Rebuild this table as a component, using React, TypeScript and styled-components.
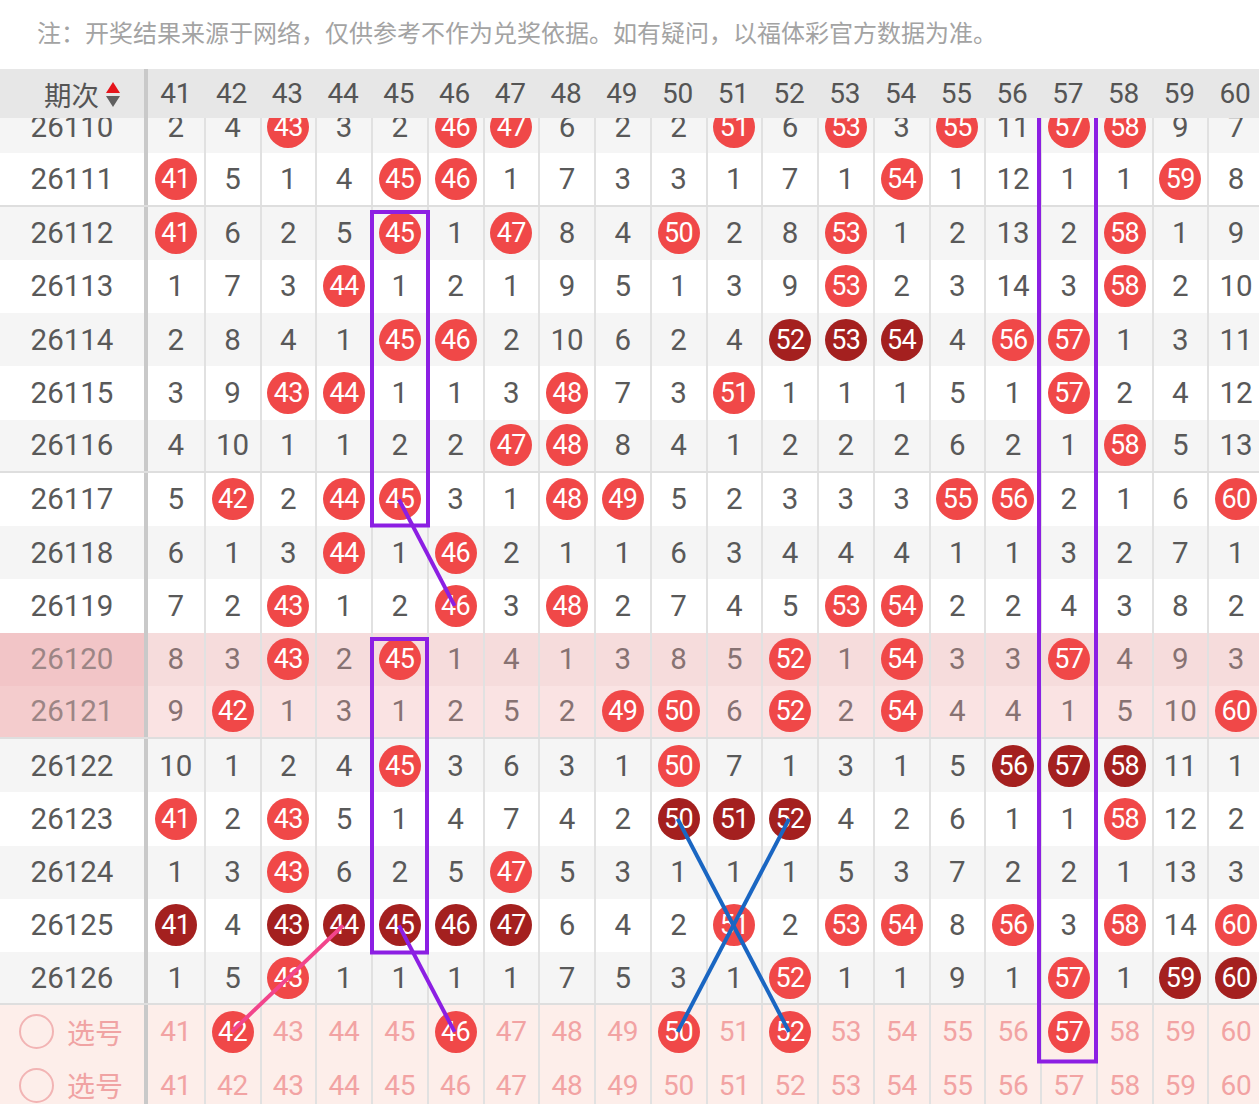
import React from 'react';
import styled, { createGlobalStyle, css } from 'styled-components';

const LEFTW = 148;
const COLW = 55.75;
const ROWH = 53.25;
const SCROLL = 18;
const FIRST = 41;

const GlobalStyle = createGlobalStyle`
  html, body { margin: 0; padding: 0; background: #ffffff; }
  body { font-family: Roboto, "Noto Sans CJK SC", sans-serif; overflow: hidden; }
  * { box-sizing: border-box; }
`;

type Mark = number | 'r' | 'd';
type Variant = 'gray' | 'white' | 'pinkA' | 'pinkB';

const rows: { issue: string; cells: Mark[] }[] = [
  { issue: '26110', cells: [2, 4, 'r', 3, 2, 'r', 'r', 6, 2, 2, 'r', 6, 'r', 3, 'r', 11, 'r', 'r', 9, 7] },
  { issue: '26111', cells: ['r', 5, 1, 4, 'r', 'r', 1, 7, 3, 3, 1, 7, 1, 'r', 1, 12, 1, 1, 'r', 8] },
  { issue: '26112', cells: ['r', 6, 2, 5, 'r', 1, 'r', 8, 4, 'r', 2, 8, 'r', 1, 2, 13, 2, 'r', 1, 9] },
  { issue: '26113', cells: [1, 7, 3, 'r', 1, 2, 1, 9, 5, 1, 3, 9, 'r', 2, 3, 14, 3, 'r', 2, 10] },
  { issue: '26114', cells: [2, 8, 4, 1, 'r', 'r', 2, 10, 6, 2, 4, 'd', 'd', 'd', 4, 'r', 'r', 1, 3, 11] },
  { issue: '26115', cells: [3, 9, 'r', 'r', 1, 1, 3, 'r', 7, 3, 'r', 1, 1, 1, 5, 1, 'r', 2, 4, 12] },
  { issue: '26116', cells: [4, 10, 1, 1, 2, 2, 'r', 'r', 8, 4, 1, 2, 2, 2, 6, 2, 1, 'r', 5, 13] },
  { issue: '26117', cells: [5, 'r', 2, 'r', 'r', 3, 1, 'r', 'r', 5, 2, 3, 3, 3, 'r', 'r', 2, 1, 6, 'r'] },
  { issue: '26118', cells: [6, 1, 3, 'r', 1, 'r', 2, 1, 1, 6, 3, 4, 4, 4, 1, 1, 3, 2, 7, 1] },
  { issue: '26119', cells: [7, 2, 'r', 1, 2, 'r', 3, 'r', 2, 7, 4, 5, 'r', 'r', 2, 2, 4, 3, 8, 2] },
  { issue: '26120', cells: [8, 3, 'r', 2, 'r', 1, 4, 1, 3, 8, 5, 'r', 1, 'r', 3, 3, 'r', 4, 9, 3] },
  { issue: '26121', cells: [9, 'r', 1, 3, 1, 2, 5, 2, 'r', 'r', 6, 'r', 2, 'r', 4, 4, 1, 5, 10, 'r'] },
  { issue: '26122', cells: [10, 1, 2, 4, 'r', 3, 6, 3, 1, 'r', 7, 1, 3, 1, 5, 'd', 'd', 'd', 11, 1] },
  { issue: '26123', cells: ['r', 2, 'r', 5, 1, 4, 7, 4, 2, 'd', 'd', 'd', 4, 2, 6, 1, 1, 'r', 12, 2] },
  { issue: '26124', cells: [1, 3, 'r', 6, 2, 5, 'r', 5, 3, 1, 1, 1, 5, 3, 7, 2, 2, 1, 13, 3] },
  { issue: '26125', cells: ['d', 4, 'd', 'd', 'd', 'd', 'd', 6, 4, 2, 'r', 2, 'r', 'r', 8, 'r', 3, 'r', 14, 'r'] },
  { issue: '26126', cells: [1, 5, 'r', 1, 1, 1, 1, 7, 5, 3, 1, 'r', 1, 1, 9, 1, 'r', 1, 'd', 'd'] },
];

const picks: number[][] = [[42, 46, 50, 52, 57], []];

const numbers = Array.from({ length: 20 }, (_, i) => FIRST + i);

const variantOf = (issue: string, idx: number): Variant => {
  if (issue === '26120') return 'pinkA';
  if (issue === '26121') return 'pinkB';
  return idx % 2 === 0 ? 'gray' : 'white';
};

const rowBg: Record<Variant, string> = {
  gray: '#f5f5f5',
  white: '#ffffff',
  pinkA: '#f6dcdc',
  pinkB: '#fae3e3',
};
const issueBg: Record<Variant, string> = {
  gray: '#f5f5f5',
  white: '#ffffff',
  pinkA: '#f2c5c7',
  pinkB: '#f4cccd',
};

const gridCols = css`
  display: grid;
  grid-template-columns: ${LEFTW}px repeat(20, ${COLW}px);
`;

const Page = styled.div`
  width: 1259px;
  height: 1104px;
  overflow: hidden;
  background: #ffffff;
  display: flex;
  flex-direction: column;
`;

const Notice = styled.div`
  height: 69px;
  flex: none;
  display: flex;
  align-items: center;
  padding-left: 37px;
  padding-bottom: 6px;
  line-height: 1;
  font-family: "Noto Sans CJK SC", sans-serif;
  font-size: 24px;
  color: #a3a3a3;
  white-space: nowrap;
`;

const HeaderRow = styled.div`
  ${gridCols};
  flex: none;
  height: 49px;
  background: #e7e7e7;
  position: relative;
  z-index: 3;
`;

const HeaderIssue = styled.div`
  display: flex;
  align-items: center;
  padding-left: 44px;
  gap: 7px;
  border-right: 4px solid #c9c9c9;
  font-family: "Noto Sans CJK SC", sans-serif;
  font-size: 27.5px;
  color: #555555;
`;

const SortIcon = styled.span`
  display: flex;
  flex-direction: column;
  gap: 3px;
  margin-top: 2px;
`;

const Triangle = styled.span<{ $up?: boolean }>`
  width: 0;
  height: 0;
  border-left: 7px solid transparent;
  border-right: 7px solid transparent;
  ${(p) =>
    p.$up
      ? css`border-bottom: 11px solid #e5141b;`
      : css`border-top: 11px solid #606060;`}
`;

const HeaderNum = styled.div`
  display: flex;
  align-items: center;
  justify-content: center;
  font-size: 28px;
  color: #555555;
`;

const Body = styled.div`
  flex: 1;
  overflow: hidden;
  position: relative;
`;

const BodyInner = styled.div`
  position: relative;
  margin-top: -${SCROLL}px;
`;

const Row = styled.div<{ $variant: Variant; $sep: boolean }>`
  ${gridCols};
  height: ${ROWH}px;
  background: ${(p) => rowBg[p.$variant]};
  ${(p) => p.$sep && css`border-bottom: 2px solid #dedede;`}
`;

const IssueCell = styled.div<{ $variant: Variant }>`
  display: flex;
  align-items: center;
  justify-content: center;
  background: ${(p) => issueBg[p.$variant]};
  border-right: 4px solid #c9c9c9;
  font-size: 29.5px;
  color: ${(p) => (p.$variant.startsWith('pink') ? '#9c8585' : '#595959')};
`;

const Cell = styled.div<{ $first: boolean; $muted?: boolean; $pick?: boolean }>`
  display: flex;
  align-items: center;
  justify-content: center;
  ${(p) => !p.$first && css`border-left: 2px solid #e1e1e1;`}
  font-size: ${(p) => (p.$pick ? '28px' : '29.5px')};
  color: ${(p) => (p.$pick ? '#f2a3a3' : p.$muted ? '#877272' : '#595959')};
`;

const Ball = styled.span<{ $dark?: boolean }>`
  width: 42px;
  height: 42px;
  border-radius: 50%;
  display: flex;
  align-items: center;
  justify-content: center;
  background: ${(p) => (p.$dark ? '#a4201f' : '#f04848')};
  color: #ffffff;
  font-size: 27px;
  letter-spacing: -0.5px;
`;

const SelectRow = styled.div`
  ${gridCols};
  height: ${ROWH}px;
  background: #fdeeea;
`;

const SelectLabel = styled.div`
  display: flex;
  align-items: center;
  padding-left: 19px;
  gap: 13px;
  border-right: 4px solid #c9c9c9;
  font-family: "Noto Sans CJK SC", sans-serif;
  font-size: 28px;
  color: #f0a3a3;
`;

const Radio = styled.span`
  width: 35px;
  height: 35px;
  border-radius: 50%;
  border: 2px solid #f2b4b4;
`;

const Overlay = styled.svg`
  position: absolute;
  left: 0;
  top: 0;
  pointer-events: none;
  z-index: 2;
`;

const cx = (n: number) => LEFTW + (n - FIRST) * COLW + COLW / 2;
const cy = (r: number) => r * ROWH + ROWH / 2;
const colLeft = (n: number) => LEFTW + (n - FIRST) * COLW;

const PURPLE = '#8c1fe3';
const BLUE = '#1a66c2';
const PINK = '#f2458c';

const Lines: React.FC = () => {
  const sel1 = rows.length; // index of first select row
  return (
    <Overlay width={1263} height={ROWH * 19}>
      <g fill="none" stroke={PURPLE} strokeWidth={4}>
        <rect x={colLeft(45) + 1} y={2 * ROWH + 5.5} width={56} height={6 * ROWH - 6} />
        <rect x={colLeft(45) + 1} y={10 * ROWH + 6.5} width={55} height={6 * ROWH - 6} />
        <rect x={colLeft(57) - 1} y={4} width={57} height={sel1 * ROWH + ROWH - 1} />
      </g>
      <g stroke={PURPLE} strokeWidth={4} strokeLinecap="butt">
        <line x1={cx(45)} y1={cy(7)} x2={cx(46)} y2={cy(9)} />
        <line x1={cx(45)} y1={cy(15)} x2={cx(46)} y2={cy(sel1)} />
      </g>
      <g stroke={BLUE} strokeWidth={4}>
        <line x1={cx(50)} y1={cy(13)} x2={cx(52)} y2={cy(sel1)} />
        <line x1={cx(52)} y1={cy(13)} x2={cx(50)} y2={cy(sel1)} />
      </g>
      <line x1={cx(44)} y1={cy(15)} x2={cx(42)} y2={cy(sel1)} stroke={PINK} strokeWidth={4} />
    </Overlay>
  );
};

export default function App() {
  return (
    <Page>
      <GlobalStyle />
      <Notice>注：开奖结果来源于网络，仅供参考不作为兑奖依据。如有疑问，以福体彩官方数据为准。</Notice>
      <HeaderRow>
        <HeaderIssue>
          期次
          <SortIcon>
            <Triangle $up />
            <Triangle />
          </SortIcon>
        </HeaderIssue>
        {numbers.map((n) => (
          <HeaderNum key={n}>{n}</HeaderNum>
        ))}
      </HeaderRow>
      <Body>
        <BodyInner>
          {rows.map((row, idx) => {
            const v = variantOf(row.issue, idx);
            const sep = (Number(row.issue) - 26111) % 5 === 0;
            return (
              <Row key={row.issue} $variant={v} $sep={sep}>
                <IssueCell $variant={v}>{row.issue}</IssueCell>
                {row.cells.map((c, i) => (
                  <Cell key={i} $first={i === 0} $muted={v.startsWith('pink')}>
                    {c === 'r' || c === 'd' ? <Ball $dark={c === 'd'}>{FIRST + i}</Ball> : c}
                  </Cell>
                ))}
              </Row>
            );
          })}
          {picks.map((p, k) => (
            <SelectRow key={k}>
              <SelectLabel>
                <Radio />
                选号
              </SelectLabel>
              {numbers.map((n, i) => (
                <Cell key={n} $first={i === 0} $pick>
                  {p.includes(n) ? <Ball>{n}</Ball> : n}
                </Cell>
              ))}
            </SelectRow>
          ))}
          <Lines />
        </BodyInner>
      </Body>
    </Page>
  );
}
